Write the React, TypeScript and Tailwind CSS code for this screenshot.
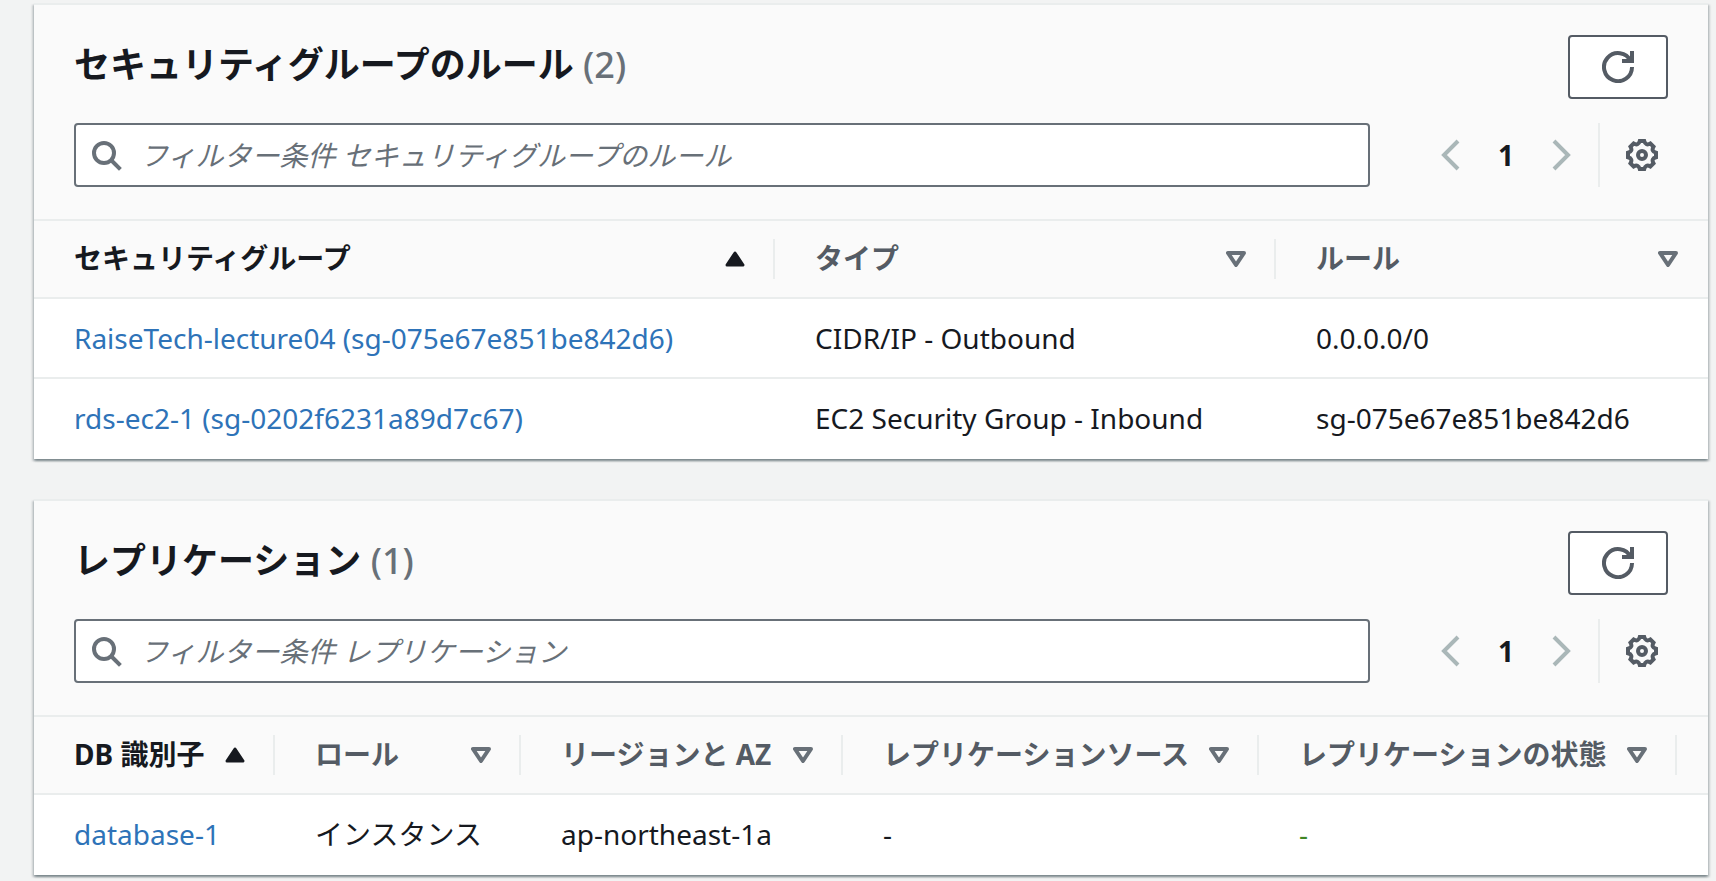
import type { ReactNode } from "react";

type Sort = "asc" | "none";

interface Column {
  label: string;
  width: string;
  sort: Sort;
}

const gearPoint = (radius: number, degrees: number) => {
  const a = (degrees * Math.PI) / 180;
  return `${(8 + radius * Math.sin(a)).toFixed(2)} ${(8 - radius * Math.cos(a)).toFixed(2)}`;
};

const gearPath =
  [0, 45, 90, 135, 180, 225, 270, 315]
    .map(
      (t, i) =>
        `${i === 0 ? "M" : ""}${gearPoint(7.1, t - 9)}L${gearPoint(7.1, t + 9)}Q${gearPoint(4.8, t + 22.5)} `,
    )
    .join("") +
  gearPoint(7.1, -9) +
  "Z";

function Icon({ children, className }: { children: ReactNode; className?: string }) {
  return (
    <svg
      viewBox="0 0 16 16"
      className={`h-8 w-8 shrink-0 ${className ?? ""}`}
      fill="none"
      stroke="currentColor"
      strokeWidth="2"
      aria-hidden="true"
    >
      {children}
    </svg>
  );
}

function SortIcon({ sort }: { sort: Sort }) {
  return (
    <svg
      viewBox="0 0 20 16"
      className={`h-4 w-5 shrink-0 ${sort === "asc" ? "text-[#16191f]" : "text-[#687078]"}`}
      stroke="currentColor"
      strokeLinejoin="round"
      aria-hidden="true"
    >
      {sort === "asc" ? (
        <path d="M10 2 18 14H2Z" fill="currentColor" strokeWidth="3" />
      ) : (
        <path d="M10 14 2 2h16Z" fill="none" strokeWidth="4" />
      )}
    </svg>
  );
}

function Panel({
  title,
  count,
  columns,
  children,
}: {
  title: string;
  count: number;
  columns: Column[];
  children: ReactNode;
}) {
  return (
    <section className="border-t-2 border-[#eaeded] bg-white shadow-[0_2px_2px_0_rgba(0,28,36,0.3),2px_2px_2px_0_rgba(0,28,36,0.15),-2px_2px_2px_0_rgba(0,28,36,0.15)]">
      <header className="flex flex-col gap-6 bg-[#fafafa] px-10 pt-[30px] pb-8">
        <div className="flex items-start justify-between">
          <h2 className="text-[36px] leading-[60px] font-bold">
            {title} <span className="font-medium text-[#687078]">({count})</span>
          </h2>
          <button
            type="button"
            aria-label="更新"
            className="flex h-16 w-[100px] items-center justify-center rounded-[4px] border-2 border-[#545b64] bg-white text-[#545b64]"
          >
            <Icon>
              <path d="M10 5h5V0" />
              <path d="M15 8a7 7 0 1 1-.7-3" />
            </Icon>
          </button>
        </div>
        <div className="flex items-center">
          <label className="flex h-16 min-w-0 flex-1 items-center gap-[18px] rounded-[4px] border-2 border-[#687078] bg-white px-[14px] text-[#687078]">
            <Icon>
              <circle cx="7" cy="7" r="5" />
              <path d="m10.5 10.5 4.7 4.7" />
            </Icon>
            <input
              type="text"
              aria-label={`フィルター条件 ${title}`}
              placeholder={`フィルター条件 ${title}`}
              className="h-full min-w-0 flex-1 bg-transparent text-[28px] text-[#16191f] outline-none placeholder:text-[#687078] placeholder:italic"
            />
          </label>
          <nav aria-label="ページ" className="ml-[66px] flex items-center">
            <button type="button" disabled aria-label="前のページ">
              <Icon className="text-[#aab7b8]">
                <path d="m11 1-7 7 7 7" />
              </Icon>
            </button>
            <button type="button" className="w-[76px] text-center text-[28px] leading-10 font-bold">
              1
            </button>
            <button type="button" disabled aria-label="次のページ">
              <Icon className="text-[#aab7b8]">
                <path d="m5 1 7 7-7 7" />
              </Icon>
            </button>
          </nav>
          <div className="ml-[22px] flex h-16 items-center border-l-2 border-[#eaeded] pr-[10px] pl-[26px]">
            <button type="button" aria-label="設定" className="text-[#545b64]">
              <Icon>
                <circle cx="8" cy="8" r="2" />
                <path d={gearPath} />
              </Icon>
            </button>
          </div>
        </div>
      </header>
      <table className="w-full table-fixed border-separate border-spacing-0 text-left text-[28px] leading-10">
        <thead>
          <tr className="bg-[#fafafa]">
            {columns.map((column, i) => (
              <th
                key={i}
                scope="col"
                className={`border-y-2 border-[#eaeded] p-0 py-[18px] font-bold ${column.width}`}
              >
                {column.label && (
                  <button
                    type="button"
                    className={`flex h-10 w-full items-center justify-between pl-10 whitespace-nowrap ${
                      i === columns.length - 1 ? "pr-[30px]" : "border-r-2 border-[#eaeded] pr-7"
                    } ${column.sort === "asc" ? "text-[#16191f]" : "text-[#545b64]"}`}
                  >
                    <span className="leading-[38px] self-start">{column.label}</span>
                    <SortIcon sort={column.sort} />
                  </button>
                )}
              </th>
            ))}
          </tr>
        </thead>
        <tbody>{children}</tbody>
      </table>
    </section>
  );
}

function Row({ cells, last }: { cells: ReactNode[]; last?: boolean }) {
  return (
    <tr>
      {cells.map((cell, i) => (
        <td
          key={i}
          className={`h-20 border-b-2 py-0 pl-10 whitespace-nowrap ${last ? "border-transparent" : "border-[#eaeded]"}`}
        >
          {cell}
        </td>
      ))}
    </tr>
  );
}

function Link({ children }: { children: ReactNode }) {
  return (
    <a href="#" className="text-[#2e73b8]">
      {children}
    </a>
  );
}

const ruleColumns: Column[] = [
  { label: "セキュリティグループ", width: "w-[741px]", sort: "asc" },
  { label: "タイプ", width: "w-[501px]", sort: "none" },
  { label: "ルール", width: "w-auto", sort: "none" },
];

const replicationColumns: Column[] = [
  { label: "DB 識別子", width: "w-[241px]", sort: "asc" },
  { label: "ロール", width: "w-[246px]", sort: "none" },
  { label: "リージョンと AZ", width: "w-[322px]", sort: "none" },
  { label: "レプリケーションソース", width: "w-[416px]", sort: "none" },
  { label: "レプリケーションの状態", width: "w-[418px]", sort: "none" },
  { label: "", width: "w-auto", sort: "none" },
];

export default function App() {
  return (
    <main
      lang="ja"
      className="flex min-h-screen flex-col gap-10 bg-[#f2f3f3] pt-[3px] pr-2 pb-1 pl-[34px] font-['Noto_Sans','Noto_Sans_CJK_JP',sans-serif] text-[#16191f]"
    >
      <Panel title="セキュリティグループのルール" count={2} columns={ruleColumns}>
        <Row
          cells={[
            <Link>RaiseTech-lecture04 (sg-075e67e851be842d6)</Link>,
            "CIDR/IP - Outbound",
            "0.0.0.0/0",
          ]}
        />
        <Row
          last
          cells={[
            <Link>rds-ec2-1 (sg-0202f6231a89d7c67)</Link>,
            "EC2 Security Group - Inbound",
            "sg-075e67e851be842d6",
          ]}
        />
      </Panel>
      <Panel title="レプリケーション" count={1} columns={replicationColumns}>
        <Row
          last
          cells={[
            <Link>database-1</Link>,
            "インスタンス",
            "ap-northeast-1a",
            "-",
            <span className="text-[#3f8624]">-</span>,
            "",
          ]}
        />
      </Panel>
    </main>
  );
}
